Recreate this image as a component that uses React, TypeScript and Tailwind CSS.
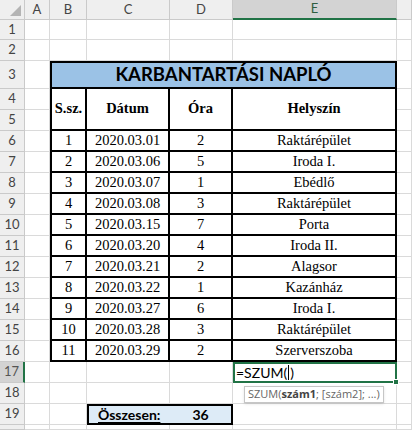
import React from 'react'

const data: [number, string, number, string][] = [
  [1, '2020.03.01', 2, 'Raktárépület'],
  [2, '2020.03.06', 5, 'Iroda I.'],
  [3, '2020.03.07', 1, 'Ebédlő'],
  [4, '2020.03.08', 3, 'Raktárépület'],
  [5, '2020.03.15', 7, 'Porta'],
  [6, '2020.03.20', 4, 'Iroda II.'],
  [7, '2020.03.21', 2, 'Alagsor'],
  [8, '2020.03.22', 1, 'Kazánház'],
  [9, '2020.03.27', 6, 'Iroda I.'],
  [10, '2020.03.28', 3, 'Raktárépület'],
  [11, '2020.03.29', 2, 'Szerverszoba'],
]

const hdr =
  "flex items-center justify-center bg-[#efefef] border-r border-b border-[#cacaca] text-[#444] text-[13px] font-['Lato',sans-serif]"
const cell = 'border-r border-b border-[#dadada]'
const serif = "font-['Liberation_Serif',serif] text-[14.5px] text-black"
const tcell = `${serif} flex items-center justify-center border-r-2 border-b-2 border-black`
const thead = `${serif} row-span-2 flex items-center justify-center font-bold border-r-2 border-b-2 border-black`

function RowHead({ n, active }: { n?: number; active?: boolean }) {
  if (active) {
    return (
      <div className="flex items-center justify-center bg-[#d3d3d3] border-r-2 border-b border-r-[#217346] border-b-[#cacaca] text-[#555] text-[13px] font-['Lato',sans-serif]">
        {n}
      </div>
    )
  }
  return <div className={hdr}>{n}</div>
}

function Empty({ count = 1 }: { count?: number }) {
  return (
    <>
      {Array.from({ length: count }).map((_, i) => (
        <div key={i} className={cell} />
      ))}
    </>
  )
}

export default function App() {
  return (
    <div className="w-[412px] h-[430px] overflow-hidden bg-white">
      <div className="grid h-[430px] grid-cols-[25px_25px_37px_83px_63px_164px_1fr] grid-rows-[20px_20px_21px_28px_repeat(16,21px)_1fr]">
        {/* column headers */}
        <div className="relative bg-[#efefef] border-r border-b border-[#cacaca]">
          <svg className="absolute right-[3px] bottom-[3px]" width="11" height="11" viewBox="0 0 11 11">
            <polygon points="11,0 11,11 0,11" fill="#b4b4b4" />
          </svg>
        </div>
        <div className={hdr}>A</div>
        <div className={hdr}>B</div>
        <div className={hdr}>C</div>
        <div className={hdr}>D</div>
        <div className="flex items-center justify-center bg-[#d3d3d3] border-r border-b-2 border-r-[#cacaca] border-b-[#217346] text-[#2f5e40] text-[13px] font-['Lato',sans-serif]">
          E
        </div>
        <div className={hdr} />

        {/* rows 1-2 */}
        <RowHead n={1} />
        <Empty count={6} />
        <RowHead n={2} />
        <Empty count={6} />

        {/* row 3: title */}
        <RowHead n={3} />
        <Empty />
        <div className="col-span-4 flex items-center justify-center bg-[#9bc2e6] border-2 border-black font-['Lato',sans-serif] font-bold text-[18.5px] text-black">
          KARBANTARTÁSI NAPLÓ
        </div>
        <Empty />

        {/* rows 4-5: header */}
        <RowHead n={4} />
        <Empty />
        <div className={`${thead} border-l-2`}>S.sz.</div>
        <div className={thead}>Dátum</div>
        <div className={thead}>Óra</div>
        <div className={thead}>Helyszín</div>
        <Empty />
        <RowHead n={5} />
        <Empty />
        <Empty />

        {/* data rows */}
        {data.map(([no, date, hours, place], i) => (
          <React.Fragment key={no}>
            <RowHead n={i + 6} />
            <Empty />
            <div className={`${tcell} border-l-2`}>{no}</div>
            <div className={tcell}>{date}</div>
            <div className={tcell}>{hours}</div>
            <div className={tcell}>{place}</div>
            <Empty />
          </React.Fragment>
        ))}

        {/* row 17: active cell */}
        <RowHead n={17} active />
        <Empty count={4} />
        <div className="relative flex items-center border-2 border-[#217346] pl-[1px] font-['Lato',sans-serif] text-[14px] text-black">
          =SZUM(<span className="mx-[1px] w-px h-[15px] bg-black" />)
          <div className="absolute -right-[4px] -bottom-[4px] w-[6px] h-[6px] bg-[#217346] border border-white" />
          <div className="absolute left-[9px] top-[22px] z-10 flex items-center h-[17px] px-[3px] bg-white border border-[#c6c6c6] shadow-sm text-[11px] text-[#666] font-['Open_Sans',sans-serif] whitespace-nowrap">
            SZUM(<span className="font-bold text-[#444]">szám1</span>; [szám2]; ...)
          </div>
        </div>
        <Empty />

        {/* row 18 */}
        <RowHead n={18} />
        <Empty count={6} />

        {/* row 19: total */}
        <RowHead n={19} />
        <Empty count={2} />
        <div className="flex items-center pl-[9px] bg-[#ddebf7] border-l-2 border-t-2 border-b-2 border-black font-['Lato',sans-serif] font-bold text-[14px] underline underline-offset-2 text-black">
          Összesen:
        </div>
        <div className="flex items-center justify-center bg-[#ddebf7] border-r-2 border-t-2 border-b-2 border-black font-['Lato',sans-serif] font-bold text-[14px] text-black">
          36
        </div>
        <Empty count={2} />

        {/* row 20, only a sliver is visible */}
        <RowHead />
        <Empty count={6} />
      </div>
    </div>
  )
}
